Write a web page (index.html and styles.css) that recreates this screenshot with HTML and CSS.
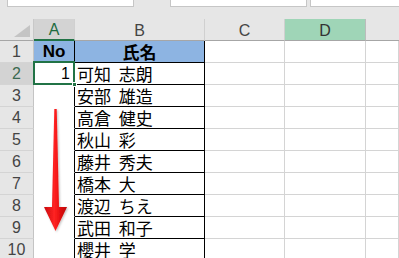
FILE: index.html
```html
<!DOCTYPE html>
<html lang="ja">
<head>
<meta charset="utf-8">
<link rel="stylesheet" href="styles.css">
</head>
<body>
<div class="topbar">
  <div class="box box1"></div>
  <div class="box box2"></div>
  <div class="box box3"></div>
</div>
<div class="sheet">
  <div class="ch corner"><svg width="16" height="12" viewBox="0 0 16 12"><polygon points="16,0 16,12 0,12" fill="#c4c4c4"/></svg></div>
  <div class="ch ch-sel">A</div>
  <div class="ch">B</div>
  <div class="ch">C</div>
  <div class="ch ch-hl">D</div>
  <div class="ch ch-last"></div>

  <div class="rh">1</div>
  <div class="c ca head num-head">No</div>
  <div class="c cb head">氏名</div>
  <div class="c"></div><div class="c"></div><div class="c"></div>

  <div class="rh rh-sel">2</div>
  <div class="c ca active">1</div>
  <div class="c cb">可知 志朗</div>
  <div class="c"></div><div class="c"></div><div class="c"></div>

  <div class="rh">3</div>
  <div class="c ca"></div>
  <div class="c cb">安部 雄造</div>
  <div class="c"></div><div class="c"></div><div class="c"></div>

  <div class="rh">4</div>
  <div class="c ca"></div>
  <div class="c cb">高倉 健史</div>
  <div class="c"></div><div class="c"></div><div class="c"></div>

  <div class="rh">5</div>
  <div class="c ca"></div>
  <div class="c cb">秋山 彩</div>
  <div class="c"></div><div class="c"></div><div class="c"></div>

  <div class="rh">6</div>
  <div class="c ca"></div>
  <div class="c cb">藤井 秀夫</div>
  <div class="c"></div><div class="c"></div><div class="c"></div>

  <div class="rh">7</div>
  <div class="c ca"></div>
  <div class="c cb">橋本 大</div>
  <div class="c"></div><div class="c"></div><div class="c"></div>

  <div class="rh">8</div>
  <div class="c ca"></div>
  <div class="c cb">渡辺 ちえ</div>
  <div class="c"></div><div class="c"></div><div class="c"></div>

  <div class="rh">9</div>
  <div class="c ca"></div>
  <div class="c cb">武田 和子</div>
  <div class="c"></div><div class="c"></div><div class="c"></div>

  <div class="rh">10</div>
  <div class="c ca"></div>
  <div class="c cb">櫻井 学</div>
  <div class="c"></div><div class="c"></div><div class="c"></div>
</div>
<svg class="arrow" width="399" height="258" viewBox="0 0 399 258">
  <defs>
    <linearGradient id="rg" x1="0" y1="0" x2="1" y2="0">
      <stop offset="0" stop-color="#c8080c"/>
      <stop offset="0.45" stop-color="#ff2424"/>
      <stop offset="0.6" stop-color="#f01414"/>
      <stop offset="1" stop-color="#b80408"/>
    </linearGradient>
    <filter id="sh" x="-50%" y="-10%" width="200%" height="130%">
      <feDropShadow dx="1" dy="1" stdDeviation="1.2" flood-color="#000" flood-opacity="0.25"/>
    </filter>
  </defs>
  <path d="M54.3,109 L56.7,109 L59,207 L67,207 L55.5,231 L44,207 L52,207 Z" fill="url(#rg)" filter="url(#sh)"/>
</svg>
</body>
</html>
```

FILE: styles.css
```css
html, body {
  margin: 0;
  padding: 0;
  width: 399px;
  height: 258px;
  overflow: hidden;
  background: #fff;
  position: relative;
}

.topbar {
  height: 19px;
  background: #e6e6e6;
  display: flex;
  align-items: flex-start;
  box-sizing: border-box;
  padding-left: 7px;
}

.box {
  height: 7px;
  background: #fff;
  box-sizing: border-box;
  border: 1px solid #c6c6c6;
  border-top: none;
}

.box1 { width: 127px; }
.box2 { width: 137px; margin-left: 36px; }
.box3 { flex: 1; margin-left: 3px; border-right: none; }

.sheet {
  display: grid;
  grid-template-columns: 34px 41px 130px 80px 81px 1fr;
  grid-template-rows: 22px;
  grid-auto-rows: 22px;
  font-family: "Noto Sans CJK JP", "Noto Sans", sans-serif;
}

.ch {
  background: #e6e6e6;
  box-sizing: border-box;
  border-right: 1px solid #d0d0d0;
  border-bottom: 1px solid #a6a6a6;
  font-family: "Liberation Sans", "DejaVu Sans", sans-serif;
  font-size: 16px;
  color: #444;
  display: flex;
  align-items: center;
  justify-content: center;
  padding-top: 2px;
}

.corner {
  justify-content: flex-end;
  align-items: flex-end;
  padding: 0 3px 3px 0;
  border-right: 1px solid #c8c8c8;
}

.corner svg { display: block; }

.ch-sel {
  background: #d3d3d3;
  color: #1e6b40;
  border-bottom: 2px solid #217346;
}

.ch-hl {
  background: #9fd5b7;
  color: #333;
  border-right: 1px solid #bcbcbc;
}

.ch-last { border-right: none; }

.rh {
  background: #e6e6e6;
  box-sizing: border-box;
  border-right: 1px solid #c4c4c4;
  border-bottom: 1px solid #d4d4d4;
  font-family: "Liberation Sans", "DejaVu Sans", sans-serif;
  font-size: 16px;
  color: #444;
  display: flex;
  align-items: center;
  justify-content: center;
  padding-top: 1px;
}

.rh-sel {
  background: #d3d3d3;
  color: #3c6a50;
}

.c {
  box-sizing: border-box;
  border-right: 1px solid #d4d4d4;
  border-bottom: 1px solid #d4d4d4;
  font-size: 17px;
  line-height: 20px;
  padding-top: 1px;
  color: #000;
  white-space: nowrap;
}

.ca {
  border-right: 1px solid #000;
  border-bottom: 1px solid #fff;
}

.cb {
  border-right: 1px solid #000;
  border-bottom: 1px solid #000;
  padding-left: 2px;
  word-spacing: 4px;
}

.head {
  background: #8db4e2;
  font-weight: bold;
  text-align: center;
  padding-left: 0;
}

.num-head {
  font-family: "Liberation Sans", sans-serif;
  font-size: 17px;
  border-bottom: 1px solid #217346;
}

.active {
  position: relative;
  text-align: right;
  padding-right: 4px;
  font-family: "Liberation Sans", sans-serif;
  font-size: 16px;
}

.active::before {
  content: "";
  position: absolute;
  left: -1px;
  top: -2px;
  right: -1px;
  bottom: -1px;
  border: 2px solid #217346;
}

.active::after {
  content: "";
  position: absolute;
  right: -3px;
  bottom: -3px;
  width: 5px;
  height: 5px;
  background: #217346;
  border: 1px solid #fff;
  box-sizing: border-box;
  z-index: 2;
}

.arrow {
  position: absolute;
  left: 0;
  top: 0;
  pointer-events: none;
}
```
